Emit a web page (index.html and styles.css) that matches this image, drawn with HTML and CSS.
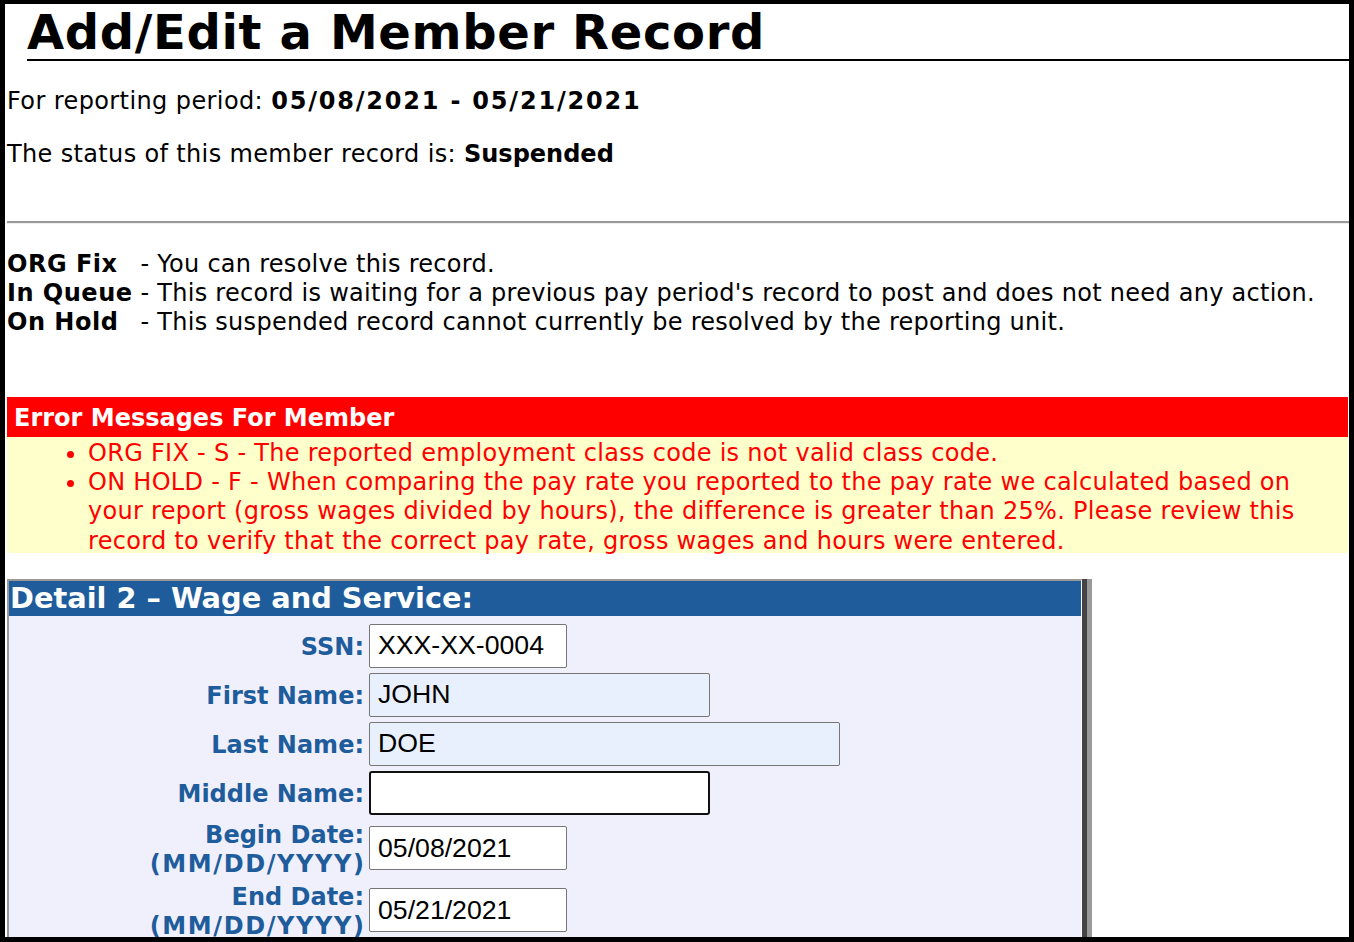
FILE: index.html
```html
<!DOCTYPE html>
<html lang="en">
<head>
<meta charset="utf-8">
<title>Add/Edit a Member Record</title>
<link rel="stylesheet" href="styles.css">
</head>
<body>
<div class="frame">
  <div class="page">
    <h1 class="title">Add/Edit a Member Record</h1>
    <p class="period">For reporting period: <b class="dates">05/08/2021 - 05/21/2021</b></p>
    <p class="status">The status of this member record is: <b>Suspended</b></p>
    <hr class="rule">
    <div class="legend">
      <b class="legend-key">ORG Fix</b><span class="legend-text">- You can resolve this record.</span>
      <b class="legend-key">In Queue</b><span class="legend-text">- This record is waiting for a previous pay period's record to post and does not need any action.</span>
      <b class="legend-key">On Hold</b><span class="legend-text">- This suspended record cannot currently be resolved by the reporting unit.</span>
    </div>
    <div class="errors">
      <div class="errors-head">Error Messages For Member</div>
      <ul class="errors-list">
        <li>ORG FIX - S - The reported employment class code is not valid class code.</li>
        <li>ON HOLD - F - When comparing the pay rate you reported to the pay rate we calculated based on your report (gross wages divided by hours), the difference is greater than 25%. Please review this record to verify that the correct pay rate, gross wages and hours were entered.</li>
      </ul>
    </div>
    <div class="panel">
      <div class="panel-head">Detail 2 – Wage and Service:</div>
      <div class="panel-body">
        <div class="form">
          <label class="lbl" for="ssn">SSN:</label>
          <div class="field"><input id="ssn" class="inp w-short" type="text" value="XXX-XX-0004"></div>
          <label class="lbl" for="fname">First Name:</label>
          <div class="field"><input id="fname" class="inp inp-fill w-mid" type="text" value="JOHN"></div>
          <label class="lbl" for="lname">Last Name:</label>
          <div class="field"><input id="lname" class="inp inp-fill w-long" type="text" value="DOE"></div>
          <label class="lbl" for="mname">Middle Name:</label>
          <div class="field"><input id="mname" class="inp inp-focus w-mid" type="text" value=""></div>
          <label class="lbl" for="bdate">Begin Date:<br><span class="fmt">(MM/DD/YYYY)</span></label>
          <div class="field"><input id="bdate" class="inp w-short" type="text" value="05/08/2021"></div>
          <label class="lbl" for="edate">End Date:<br><span class="fmt">(MM/DD/YYYY)</span></label>
          <div class="field"><input id="edate" class="inp w-short" type="text" value="05/21/2021"></div>
        </div>
      </div>
    </div>
  </div>
</div>
</body>
</html>
```
FILE: styles.css
```css
html, body {
  margin: 0;
  padding: 0;
  background: #fff;
}

.frame {
  box-sizing: border-box;
  width: 1354px;
  height: 942px;
  border-style: solid;
  border-color: #000;
  border-width: 4px 5px 5px 5px;
  overflow: hidden;
  background: #fff;
}

.page {
  padding-left: 2px;
  font-family: "DejaVu Sans", Verdana, sans-serif;
  font-size: 24px;
  line-height: 29px;
  color: #000;
}

.title {
  margin: 4px 0 0 20px;
  padding-bottom: 3px;
  border-bottom: 2px solid #000;
  font-size: 48px;
  line-height: 48px;
  font-weight: bold;
  letter-spacing: 0.65px;
}

.period {
  margin: 26px 0 0;
  letter-spacing: 0.4px;
}

.dates {
  letter-spacing: 1.8px;
}

.status {
  margin: 24px 0 0;
  letter-spacing: 0.35px;
}

.status b {
  letter-spacing: 0;
}

.rule {
  margin: 52px 0 0;
  height: 0;
  border: 0;
  border-top: 2px solid #999;
  border-bottom: 1px solid #eee;
}

.legend {
  margin-top: 26px;
  display: grid;
  grid-template-columns: auto 1fr;
  column-gap: 8px;
}

.legend-key {
  font-weight: bold;
  letter-spacing: 0.5px;
}

.legend-text {
  letter-spacing: 0.27px;
}

.errors {
  margin: 60px 1px 0 0;
}

.errors-head {
  background: #f00;
  color: #fff;
  font-weight: bold;
  height: 40px;
  box-sizing: border-box;
  padding: 2px 0 0 7px;
  line-height: 38px;
}

.errors-list {
  margin: 0;
  padding: 2px 40px 0 81px;
  background: #ffffcc;
  color: #f00;
  letter-spacing: 0.29px;
  line-height: 29.2px;
  height: 116px;
  box-sizing: border-box;
}

.panel {
  margin-top: 26px;
  width: 1072px;
  border-top: 2px solid #999;
  border-left: 2px solid #999;
  border-right: 1px solid #fff;
  box-shadow: 5px 0 0 #444, 10px 0 0 #999;
  background: #f0f0fc;
}

.panel-head {
  background: #1e5c9b;
  color: #fff;
  font-weight: bold;
  font-size: 28.8px;
  height: 35px;
  line-height: 35px;
  padding-left: 1px;
}

.panel-body {
  padding-top: 7px;
  padding-bottom: 20px;
}

.form {
  display: grid;
  grid-template-columns: 355px 1fr;
  grid-auto-rows: minmax(45px, auto);
  column-gap: 5px;
  row-gap: 4px;
  align-items: center;
}

.lbl {
  text-align: right;
  font-weight: bold;
  color: #1e5c9b;
  padding-top: 2px;
  margin-bottom: -2px;
}

.fmt {
  letter-spacing: 1.6px;
  margin-right: -1.6px;
}

.field {
  display: flex;
  align-items: center;
}

.inp {
  box-sizing: border-box;
  height: 44px;
  margin: 0;
  padding: 0 8px;
  border: 1px solid #767676;
  border-radius: 2px;
  background: #fff;
  color: #000;
  font-family: "Liberation Sans", Arial, sans-serif;
  font-size: 26.67px;
}

.inp-fill {
  background: #e8f0fe;
}

.inp-focus {
  border: 2px solid #111;
  border-radius: 3px;
}

.w-short {
  width: 198px;
}

.w-mid {
  width: 341px;
}

.w-long {
  width: 471px;
}
```
